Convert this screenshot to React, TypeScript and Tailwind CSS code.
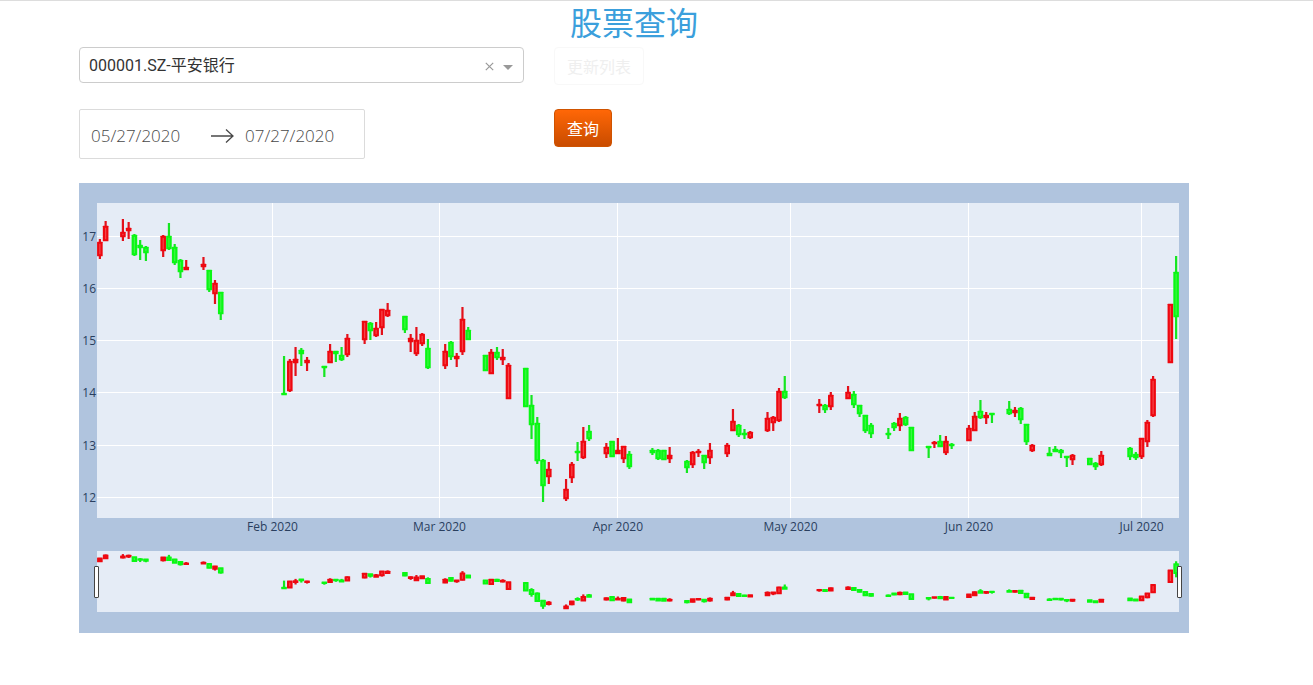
import { useState } from "react"
import clsx from "clsx"

type Candle = {
  day: number
  high: number
  top: number
  bottom: number
  low: number
  up: boolean
}

type Row = [number, number, number, number, number, 0 | 1]

const PLOT = { x: 18, y: 20, width: 1082, height: 315 }
const SLIDER = { x: 18, y: 368, width: 1082, height: 61 }
const DAY_COUNT = 188

// day since 2020-01-02, high, body top, body bottom, low, 1 = up / 0 = down
const ROWS: Row[] = [
  [0, 36, 39, 53, 56, 1],
  [1, 18, 23, 38, 38, 1],
  [4, 16, 29, 34, 38, 1],
  [5, 19, 25, 28, 36, 1],
  [6, 31, 32, 52, 53, 0],
  [7, 37, 42, 45, 57, 0],
  [8, 43, 44, 50, 58, 0],
  [11, 32, 33, 48, 54, 1],
  [12, 20, 33, 46, 47, 0],
  [13, 41, 44, 60, 62, 0],
  [14, 56, 57, 69, 75, 0],
  [15, 57, 64, 67, 67, 1],
  [18, 54, 61, 64, 67, 1],
  [19, 67, 67, 87, 89, 0],
  [20, 77, 80, 91, 101, 1],
  [21, 89, 89, 111, 117, 0],
  [32, 153, 190, 192, 192, 0],
  [33, 156, 158, 188, 189, 1],
  [34, 144, 156, 160, 173, 1],
  [35, 145, 147, 151, 163, 0],
  [36, 154, 157, 160, 168, 1],
  [39, 163, 163, 165, 174, 0],
  [40, 141, 148, 160, 160, 1],
  [41, 148, 148, 151, 159, 0],
  [42, 144, 152, 157, 158, 0],
  [43, 131, 135, 152, 154, 1],
  [46, 118, 118, 137, 141, 1],
  [47, 119, 120, 128, 137, 0],
  [48, 119, 125, 133, 134, 1],
  [49, 106, 106, 125, 132, 1],
  [50, 100, 107, 113, 114, 1],
  [53, 113, 113, 127, 130, 0],
  [54, 131, 135, 139, 149, 1],
  [55, 124, 137, 151, 153, 1],
  [56, 130, 131, 141, 143, 1],
  [57, 136, 145, 165, 166, 0],
  [60, 141, 148, 163, 166, 1],
  [61, 138, 139, 154, 157, 0],
  [62, 150, 153, 156, 164, 1],
  [63, 104, 116, 149, 152, 1],
  [64, 124, 127, 137, 137, 0],
  [67, 152, 152, 168, 168, 0],
  [68, 146, 149, 171, 171, 1],
  [69, 144, 149, 155, 157, 0],
  [70, 146, 154, 157, 162, 1],
  [71, 160, 162, 196, 196, 1],
  [74, 165, 165, 204, 204, 0],
  [75, 192, 202, 222, 236, 0],
  [76, 214, 220, 258, 261, 0],
  [77, 256, 257, 283, 299, 0],
  [78, 259, 266, 274, 281, 1],
  [81, 276, 286, 296, 298, 1],
  [82, 259, 261, 275, 280, 1],
  [83, 239, 248, 250, 258, 0],
  [84, 224, 238, 255, 256, 1],
  [85, 222, 228, 236, 238, 0],
  [88, 240, 244, 251, 255, 1],
  [89, 238, 238, 254, 254, 0],
  [90, 235, 247, 251, 251, 1],
  [91, 243, 243, 256, 260, 1],
  [92, 248, 251, 264, 266, 0],
  [96, 245, 247, 250, 252, 0],
  [97, 246, 247, 256, 257, 0],
  [98, 247, 247, 257, 257, 0],
  [99, 244, 252, 256, 260, 1],
  [102, 257, 258, 265, 270, 0],
  [103, 248, 249, 262, 265, 1],
  [104, 246, 248, 250, 254, 1],
  [105, 252, 252, 260, 266, 0],
  [106, 240, 247, 255, 261, 1],
  [109, 240, 242, 251, 254, 1],
  [110, 206, 218, 228, 228, 1],
  [111, 221, 222, 232, 234, 0],
  [112, 226, 230, 232, 236, 0],
  [113, 228, 229, 235, 236, 1],
  [116, 209, 215, 228, 229, 1],
  [117, 213, 214, 220, 228, 1],
  [118, 185, 188, 218, 219, 1],
  [119, 173, 188, 195, 196, 0],
  [125, 196, 201, 203, 210, 1],
  [126, 201, 202, 207, 210, 0],
  [127, 189, 192, 204, 207, 1],
  [130, 183, 189, 196, 196, 1],
  [131, 188, 191, 202, 205, 0],
  [132, 202, 202, 211, 214, 0],
  [133, 212, 212, 228, 230, 0],
  [134, 220, 222, 231, 235, 0],
  [137, 225, 230, 232, 236, 0],
  [138, 219, 220, 225, 228, 0],
  [139, 210, 215, 223, 228, 1],
  [140, 213, 214, 222, 223, 0],
  [141, 224, 224, 248, 248, 0],
  [144, 243, 243, 245, 255, 0],
  [145, 238, 239, 241, 245, 1],
  [146, 232, 238, 244, 244, 0],
  [147, 233, 238, 250, 252, 1],
  [148, 240, 241, 243, 246, 0],
  [151, 222, 225, 238, 238, 1],
  [152, 209, 213, 228, 228, 1],
  [153, 197, 208, 215, 216, 0],
  [154, 209, 212, 215, 221, 1],
  [155, 210, 210, 212, 220, 0],
  [158, 198, 206, 211, 212, 0],
  [159, 204, 207, 210, 214, 1],
  [160, 204, 205, 217, 221, 0],
  [161, 221, 221, 239, 242, 0],
  [162, 241, 242, 248, 249, 1],
  [165, 244, 250, 253, 253, 0],
  [166, 243, 246, 249, 249, 0],
  [167, 246, 247, 250, 255, 0],
  [168, 253, 253, 255, 264, 0],
  [169, 251, 252, 257, 262, 1],
  [172, 255, 255, 262, 262, 0],
  [173, 259, 260, 264, 267, 0],
  [174, 248, 252, 262, 263, 1],
  [179, 244, 245, 254, 257, 0],
  [180, 249, 251, 255, 257, 0],
  [181, 235, 235, 254, 256, 1],
  [182, 217, 219, 239, 244, 1],
  [183, 173, 176, 213, 214, 1],
  [186, 101, 101, 160, 160, 1],
  [187, 53, 69, 114, 136, 0],
]

const CANDLES: Candle[] = ROWS.map(([day, high, top, bottom, low, up]) => ({
  day,
  high,
  top,
  bottom,
  low,
  up: up === 1,
}))

const PRICE_TICKS = [
  { label: "17", y: 33 },
  { label: "16", y: 85 },
  { label: "15", y: 137 },
  { label: "14", y: 189 },
  { label: "13", y: 242 },
  { label: "12", y: 294 },
]

const MONTH_TICKS = [
  { label: "Feb 2020", day: 30 },
  { label: "Mar 2020", day: 59 },
  { label: "Apr 2020", day: 90 },
  { label: "May 2020", day: 120 },
  { label: "Jun 2020", day: 151 },
  { label: "Jul 2020", day: 181 },
]

const STOCKS = ["000001.SZ-平安银行", "000002.SZ-万科A", "000004.SZ-国农科技"]

const dayToX = (day: number) => ((day + 0.5) / DAY_COUNT) * PLOT.width

function Candles({ scale }: { scale: number }) {
  return (
    <>
      {CANDLES.map(({ day, high, top, bottom, low, up }) => {
        const x = dayToX(day)
        // the outline is 2px at every zoom, so only the inner box is scaled
        const bodyTop = (top + 1) * scale - 1.2
        const bodyBottom = (bottom - 1) * scale + 1.2
        return (
          <g key={day}>
            <rect
              x={x - 1.1}
              y={high * scale}
              width={2.2}
              height={(low - high) * scale}
              className={up ? "fill-[#e3101a]" : "fill-[#14e620]"}
            />
            <rect
              x={x - 2.8}
              y={bodyTop}
              width={5.6}
              height={bodyBottom - bodyTop}
              rx={0.5}
              className={up ? "fill-[#ee0810]" : "fill-[#0af714]"}
            />
            {bodyBottom - bodyTop > 5 && (
              <rect
                x={x - 0.6}
                y={bodyTop + 2}
                width={1.2}
                height={bodyBottom - bodyTop - 4}
                className={up ? "fill-[#f5464c]" : "fill-[#3df545]"}
              />
            )}
          </g>
        )
      })}
    </>
  )
}

function Handle({ x }: { x: number }) {
  return <rect x={x} y={383.5} width={4} height={31} rx={0.5} className="cursor-ew-resize fill-white stroke-[#444]" />
}

function CandleChart() {
  return (
    <svg viewBox="0 0 1110 450" role="img" aria-label="000001.SZ" className="block w-full bg-[#b0c4de]">
      <defs>
        <clipPath id="plot">
          <rect width={PLOT.width} height={PLOT.height} />
        </clipPath>
      </defs>

      <g transform={`translate(${PLOT.x} ${PLOT.y})`}>
        <rect width={PLOT.width} height={PLOT.height} className="fill-[#e5ecf6]" />
        {MONTH_TICKS.map((tick) => {
          const x = Math.round(dayToX(tick.day) - 0.5) + 0.5
          return <line key={tick.label} x1={x} x2={x} y1={0} y2={PLOT.height} className="stroke-white" />
        })}
        {PRICE_TICKS.map((tick) => (
          <line key={tick.label} x1={0} x2={PLOT.width} y1={tick.y + 0.5} y2={tick.y + 0.5} className="stroke-white" />
        ))}
        <g clipPath="url(#plot)">
          <Candles scale={1} />
        </g>
      </g>

      <g className="fill-[#2a3f5f] font-['Open_Sans','Noto_Sans',sans-serif] text-[12px]">
        {PRICE_TICKS.map((tick) => (
          <text key={tick.label} x={PLOT.x - 1} y={PLOT.y + tick.y + 5} textAnchor="end">
            {tick.label}
          </text>
        ))}
        {MONTH_TICKS.map((tick) => (
          <text key={tick.label} x={PLOT.x + dayToX(tick.day)} y={348} textAnchor="middle">
            {tick.label}
          </text>
        ))}
      </g>

      <g transform={`translate(${SLIDER.x} ${SLIDER.y})`}>
        <rect width={SLIDER.width} height={SLIDER.height} className="fill-[#e5ecf6]" />
        <g clipPath="url(#plot)">
          <Candles scale={SLIDER.height / PLOT.height} />
        </g>
      </g>
      <Handle x={15.5} />
      <Handle x={1098.5} />
    </svg>
  )
}

function StockSelect() {
  const [stock, setStock] = useState(STOCKS[0])

  return (
    <div className="relative">
      <select
        aria-label="股票"
        value={stock}
        onChange={(e) => setStock(e.target.value)}
        className="block h-9 w-full appearance-none rounded border border-[#ccc] bg-white pt-0.5 pr-14 pl-[9px] font-['Roboto','Noto_Sans_CJK_SC',sans-serif] text-base text-[#333] outline-none"
      >
        <option value="" />
        {STOCKS.map((item) => (
          <option key={item} value={item}>
            {item}
          </option>
        ))}
      </select>
      <div className="pointer-events-none absolute inset-y-0 right-[11px] flex items-center gap-[9px]">
        <button type="button" aria-label="清除" onClick={() => setStock("")} className="pointer-events-auto pt-0.5">
          <svg viewBox="0 0 9 9" className="size-[9px] stroke-[#999]" fill="none" strokeWidth={1.2}>
            <path d="M.8.8l7.4 7.4M8.2.8L.8 8.2" />
          </svg>
        </button>
        <svg viewBox="0 0 10 5" className="mt-1 h-[5px] w-2.5 fill-[#999]">
          <path d="M0 0h10L5 5z" />
        </svg>
      </div>
    </div>
  )
}

function DateInput({ label, value, onChange }: { label: string; value: string; onChange: (v: string) => void }) {
  return (
    <input
      type="text"
      aria-label={label}
      value={value}
      onChange={(e) => onChange(e.target.value)}
      className="w-[130px] bg-transparent pl-[11px] font-['Open_Sans',sans-serif] text-[17px] leading-6 font-light text-[#484848] outline-none"
    />
  )
}

export default function App() {
  const [start, setStart] = useState("05/27/2020")
  const [end, setEnd] = useState("07/27/2020")
  const button = "h-[38px] rounded border px-3 text-base leading-6"

  return (
    <main className="border-t border-[#ddd] bg-white pr-[124px] pb-[52px] pl-[79px] font-['Noto_Sans_CJK_SC',sans-serif]">
      <h1 className="mb-1.5 text-center text-[32px] leading-10 text-[#3b9fdc]">股票查询</h1>

      <div className="grid grid-cols-12 gap-x-[30px] gap-y-6">
        <div className="col-span-5">
          <StockSelect />
        </div>
        <div className="col-span-7">
          <button
            type="button"
            disabled
            className={clsx(button, "border-[#f8f8f8] bg-white text-[#efefef]")}
          >
            更新列表
          </button>
        </div>

        <div className="col-span-5">
          <div className="flex h-[50px] w-[286px] items-center rounded-xs border border-[#dbdbdb] pt-1">
            <DateInput label="开始日期" value={start} onChange={setStart} />
            <svg viewBox="0 0 24 16" className="h-4 w-6 shrink-0 stroke-[#484848]" fill="none" strokeWidth={1.3}>
              <path d="M1 8h22M16 1.5L23 8l-7 6.5" />
            </svg>
            <DateInput label="结束日期" value={end} onChange={setEnd} />
          </div>
        </div>
        <div className="col-span-7">
          <button
            type="button"
            className={clsx(button, "border-[#cf5300] bg-linear-to-b from-[#ff6707] to-[#c94c00] text-white")}
          >
            查询
          </button>
        </div>

        <div className="col-span-12">
          <CandleChart />
        </div>
      </div>
    </main>
  )
}
